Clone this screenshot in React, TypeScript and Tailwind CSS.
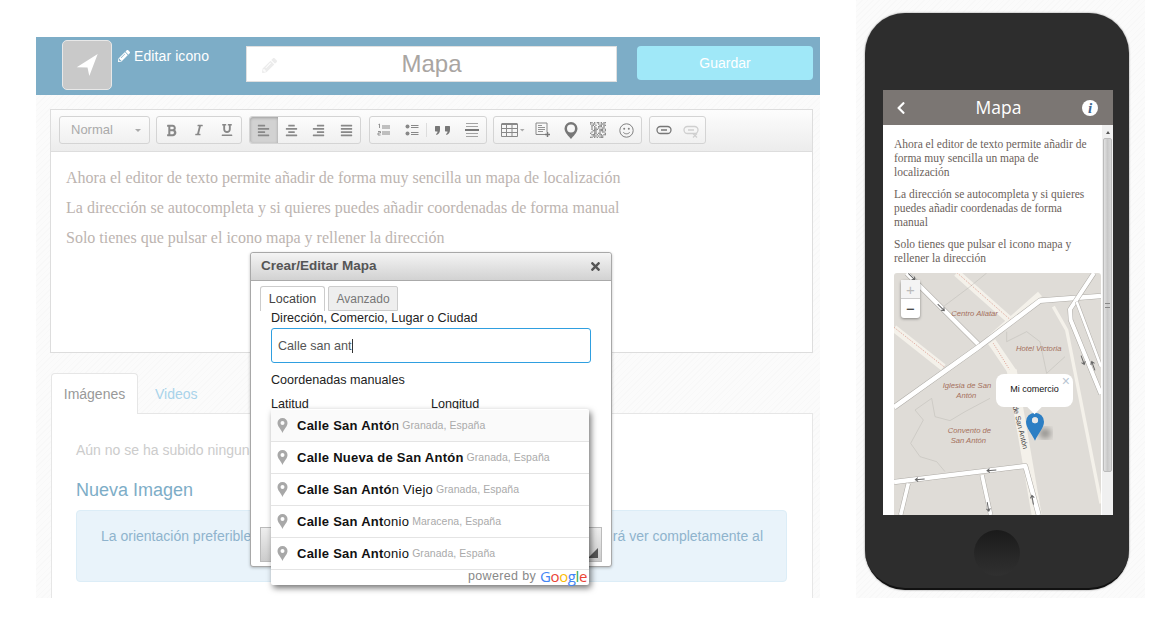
import React from "react";
import { FaPencilAlt, FaBold, FaItalic, FaUnderline, FaAlignLeft, FaAlignCenter, FaAlignRight, FaAlignJustify, FaTimes, FaChevronLeft } from "react-icons/fa";

const tex = "bg-[#fafafa] bg-[repeating-linear-gradient(135deg,#f8f8f8_0px,#f8f8f8_1px,#fbfbfb_1px,#fbfbfb_4px)]";

function Group({ children, className = "" }: { children: React.ReactNode; className?: string }) {
  return <div className={`h-[28px] flex items-center border border-[#d4d4d4] rounded-[3px] bg-gradient-to-b from-[#fcfcfc] to-[#f0f0f0] ${className}`}>{children}</div>;
}
function Btn({ children, w = 28, active = false }: { children: React.ReactNode; w?: number; active?: boolean }) {
  return (
    <div style={{ width: w }} className={`h-full flex items-center justify-center text-[#888] ${active ? "bg-[#d2d2d2] shadow-[inset_0_1px_3px_rgba(0,0,0,0.25)] rounded-l-[3px]" : ""}`}>
      {children}
    </div>
  );
}
function OlIcon() {
  return (
    <svg width="14" height="14" viewBox="0 0 14 14" fill="none" stroke="#888">
      <path d="M5 3h8M5 5h8M5 9h8M5 11h8" />
      <path d="M1.500 1.500 2.500 1v4M1 8.500h2.500v1.500H1V12h2.500" strokeWidth=".9" />
    </svg>
  );
}
function UlIcon() {
  return (
    <svg width="14" height="14" viewBox="0 0 14 14" fill="#888" stroke="#888">
      <circle cx="2.500" cy="3.500" r="2" stroke="none" />
      <circle cx="2.500" cy="10.500" r="2" stroke="none" />
      <path d="M6 2.500h7.500M6 4.500h7.500M6 9.500h7.500M6 11.500h7.500" />
    </svg>
  );
}
function QuoteIcon() {
  return (
    <svg width="15" height="9" viewBox="0 0 15 9" fill="#777">
      <path d="M0 .5C0 .2.300 0 .6 0h3.800c.3 0 .6.200.6.500V4C5 6.500 3.500 8.300 1.500 9L1 8c1-.5 1.500-1.300 1.500-2.500H.6C.3 5.500 0 5.300 0 5zM10 .5c0-.3.300-.5.600-.5h3.800c.3 0 .6.200.6.500V4c0 2.500-1.500 4.300-3.500 5L11 8c1-.5 1.500-1.300 1.500-2.500h-1.900c-.3 0-.6-.2-.6-.5z" />
    </svg>
  );
}
function TableIcon() {
  return (
    <svg width="24" height="14" viewBox="0 0 24 14" fill="none" stroke="#888">
      <path d="M.5 1h16" strokeWidth="2" />
      <path d="M.5 1v12.500h16V1M.5 5.500h16M.5 9.500h16M5.500 1v12.500M11 1v12.500" />
      <path d="M19 6h4.500l-2.250 2.500z" fill="#aaa" stroke="none" />
    </svg>
  );
}
function DocIcon() {
  return (
    <svg width="16" height="16" viewBox="0 0 16 16" fill="none" stroke="#888">
      <path d="M11.500 12.500H1V1h11v9" />
      <path d="M3 3.500h4M3 5.500h7M3 7.500h7M3 9.500h5" strokeWidth=".9" />
      <path d="M12.500 10v5M10 12.500h5" strokeWidth="1.500" stroke="#777" />
    </svg>
  );
}
function PinOutline() {
  return (
    <svg width="14" height="17" viewBox="0 0 14 17">
      <path fillRule="evenodd" d="M7 0a6.500 6.500 0 0 1 6.500 6.500C13.500 10.500 9 14.500 7 17 5 14.500.5 10.500.5 6.500A6.500 6.500 0 0 1 7 0zm0 2.500a4 4 0 1 0 0 8 4 4 0 0 0 0-8z" fill="#777" />
    </svg>
  );
}
function QrIcon() {
  const cells = "110101101011101100101110011010011011010100111010010110100110010111011101001110011101010110010110100110110001011101011011001110101100110101011100".split("");
  return (
    <svg width="16" height="16" viewBox="0 0 12 12">
      {cells.slice(0, 144).map((c, i) => (c === "1" ? <rect key={i} x={i % 12} y={Math.floor(i / 12)} width="1" height="1" fill="#8c8c8c" /> : null))}
    </svg>
  );
}
function SmileIcon() {
  return (
    <svg width="15" height="15" viewBox="0 0 15 15" fill="none" stroke="#808080">
      <circle cx="7.500" cy="7.500" r="6.700" />
      <circle cx="5.200" cy="5.700" r="1" fill="#808080" stroke="none" />
      <circle cx="9.800" cy="5.700" r="1" fill="#808080" stroke="none" />
      <path d="M4.300 9.300c1.500 2 4.900 2 6.400 0" />
    </svg>
  );
}
function LinkIcon({ muted = false }: { muted?: boolean }) {
  const s = muted ? "#cfcfcf" : "#777";
  return (
    <svg width="16" height="16" viewBox="0 0 16 16" fill="none" stroke={s} strokeWidth="1.300">
      <rect x="1" y="4.500" width="14" height="7" rx="3.500" />
      <path d="M5 8h6" strokeWidth="1.500" />
      {muted ? <path d="M10 11.500l4 4M14 11.500l-4 4" /> : null}
    </svg>
  );
}
function HrIcon() {
  return (
    <svg width="14" height="16" viewBox="0 0 14 16" stroke="#999">
      <path d="M1 1.500h12M1 4.500h12M1 11.500h12M1 14.500h12" strokeWidth=".9" />
      <path d="M0 8h14" strokeWidth="2" stroke="#777" />
    </svg>
  );
}
function GreyPin() {
  return (
    <svg width="11" height="15" viewBox="0 0 11 15" className="shrink-0">
      <path fillRule="evenodd" d="M5.500 0a5 5 0 0 1 5 5c0 3.500-3.500 6-5 10-1.500-4-5-6.500-5-10a5 5 0 0 1 5-5zm0 3a2 2 0 1 0 0 4 2 2 0 0 0 0-4z" fill="#a8a8a8" />
    </svg>
  );
}

function Road({ d, w = 15 }: { d: string; w?: number }) {
  return (
    <>
      <path d={d} fill="none" stroke="#aeaba6" strokeWidth={w + 3} strokeLinejoin="round" />
      <path d={d} fill="none" stroke="#ffffff" strokeWidth={w} strokeLinejoin="round" />
    </>
  );
}
function Arrow({ x, y, a }: { x: number; y: number; a: number }) {
  return (
    <g transform={`translate(${x} ${y}) rotate(${a})`} stroke="#666" strokeWidth="3" fill="none">
      <path d="M-14 0h28M6-6l8 6-8 6" />
    </g>
  );
}
function MapArt() {
  return (
    <svg viewBox="42 9 621 726" className="w-full h-full block" style={{ fontFamily: '"Liberation Sans", sans-serif' }}>
      <defs>
        <filter id="blur"><feGaussianBlur stdDeviation="9" /></filter>
      </defs>
      <rect x="42" y="9" width="621" height="726" fill="#dfdcd7" />
      <g fill="none" stroke="#f4f1ea">
        <path d="M230 9 395 155" strokeWidth="22" />
        <path d="M42 175 190 292" strokeWidth="22" />
        <path d="M335 215 400 310" strokeWidth="26" />
        <path d="M395 300 470 735" strokeWidth="30" />
        <path d="M520 110 560 180 663 700" strokeWidth="10" />
        <path d="M330 205 480 72" strokeWidth="18" />
      </g>
      <g fill="none" stroke="#d2796a" strokeWidth="2" strokeDasharray="3 4">
        <path d="M232 9 392 150" />
        <path d="M42 172 194 292" />
        <path d="M340 220 388 298" />
      </g>
      <g fill="none" stroke="#bdbab4" strokeWidth="1.500">
        <path d="M105 420 155 385 165 440 210 452 255 425 330 385" />
        <path d="M105 420 130 450 92 520 120 560 170 575 195 605" />
        <path d="M380 185 380 215 440 185 480 215 500 310 555 260" />
        <path d="M190 110 270 50 320 9" />
      </g>
      <Road d="M80 9 300 228" w={13} />
      <Road d="M42 412 300 228 480 92 663 78" w={14} />
      <Road d="M642 9 570 118 572 150 663 372" w={12} />
      <Road d="M590 95 663 290" w={8} />
      <Road d="M42 636 436 588 476 735" w={13} />
      <Road d="M85 640 62 735" w={11} />
      <Road d="M306 615 332 735" w={11} />
      <Arrow x={95} y={20} a={45} />
      <Arrow x={183} y={112} a={45} />
      <Arrow x={608} y={270} a={70} />
      <Arrow x={640} y={288} a={250} />
      <Arrow x={335} y={601} a={175} />
      <Arrow x={120} y={628} a={175} />
      <Arrow x={458} y={690} a={260} />
      <Arrow x={324} y={710} a={80} />
      <g fill="#a5705c" fontSize="23" fontStyle="italic">
        <text x="214" y="138">Centro Aliatar</text>
        <text x="408" y="244">Hotel Victoria</text>
        <text x="188" y="354">Iglesia de San</text>
        <text x="229" y="384">Antón</text>
        <text x="203" y="488">Convento de</text>
        <text x="212" y="518">San Antón</text>
      </g>
      <text x="0" y="0" fontSize="22" fill="#444" transform="translate(398 410) rotate(76)">de San Antón</text>
      <ellipse cx="495" cy="490" rx="18" ry="16" fill="#000" opacity=".35" filter="url(#blur)" />
      <path fillRule="evenodd" d="M465 428a27 27 0 0 1 27 27c0 18-17 35-27 57-10-22-27-39-27-57a27 27 0 0 1 27-27zm0 14a9 9 0 1 0 0 18 9 9 0 0 0 0-18z" fill="#2d7fc4" />
      <circle cx="465" cy="451" r="9" fill="#e8e8e8" />
    </svg>
  );
}

const results: [string, string, string][] = [
  ["Calle San Antó", "n", "Granada, España"],
  ["Calle Nueva de San Antón", "", "Granada, España"],
  ["Calle San Antó", "n Viejo", "Granada, España"],
  ["Calle San Ant", "onio", "Maracena, España"],
  ["Calle San Ant", "onio", "Granada, España"],
];

export default function App() {
  return (
    <div className="w-[1176px] h-[640px] bg-white flex items-start pl-[36px] overflow-hidden" style={{ fontFamily: '"Liberation Sans", Arial, sans-serif' }}>
      {/* Left panel */}
      <div className={`relative mt-[37px] w-[784px] h-[561px] ${tex}`}>
        <div className="h-[58px] bg-[#7dadc7] flex items-start">
          <div className="ml-[26px] mt-[3px] w-[50px] h-[50px] rounded-[5px] border border-[#e8e8e8] bg-[#c9c9c9] flex items-center justify-center">
            <svg width="26" height="26" viewBox="0 0 26 26"><path d="M23.700 2 2.700 15.300 13.500 15.500 15.300 24z" fill="#fff" /></svg>
          </div>
          <div className="ml-[6px] mt-[11px] w-[128px] flex items-center gap-[4px] text-white text-[14px] leading-[16px] tracking-[0.1px]">
            <FaPencilAlt size={12} />
            <span>Editar icono</span>
          </div>
          <div className="mt-[9px] w-[371px] h-[36px] bg-white border border-[#e0e0e0] relative flex items-center justify-center text-[24px] text-[#a9a5a2]">
            <span className="absolute left-[15px] top-[11px] text-[#ececec]"><FaPencilAlt size={15} /></span>
            Mapa
          </div>
          <div className="ml-[20px] mt-[9px] w-[176px] h-[34px] rounded-[4px] bg-[#a0e8f8] text-white text-[14px] flex items-center justify-center">Guardar</div>
        </div>

        {/* Editor */}
        <div className="ml-[14px] mt-[14px] w-[763px] h-[244px] border border-[#dddddd] bg-white">
          <div className="h-[42px] border-b border-[#dddddd] bg-gradient-to-b from-[#fdfdfd] to-[#ececec] pl-[8px] pt-[6px] flex items-start">
            <Group className="w-[91px] justify-between pl-[11px] pr-[8px] text-[13px] text-[#aaa]">
              <span>Normal</span>
              <span className="w-0 h-0 border-x-[3px] border-x-transparent border-t-[3px] border-t-[#aaa]" />
            </Group>
            <Group className="w-[86px] ml-[6px]">
              <Btn><FaBold size={13} /></Btn>
              <Btn><FaItalic size={12} /></Btn>
              <Btn><FaUnderline size={12} /></Btn>
            </Group>
            <Group className="w-[112px] ml-[7px]">
              <Btn active><FaAlignLeft size={13} /></Btn>
              <Btn><FaAlignCenter size={13} /></Btn>
              <Btn><FaAlignRight size={13} /></Btn>
              <Btn><FaAlignJustify size={13} /></Btn>
            </Group>
            <Group className="w-[118px] ml-[8px]">
              <Btn><OlIcon /></Btn>
              <Btn><UlIcon /></Btn>
              <div className="w-px h-[14px] bg-[#ddd]" />
              <Btn w={32}><QuoteIcon /></Btn>
              <Btn><HrIcon /></Btn>
            </Group>
            <Group className="w-[149px] ml-[6px] pl-[2px]">
              <Btn w={33}><TableIcon /></Btn>
              <Btn><DocIcon /></Btn>
              <Btn w={27}><PinOutline /></Btn>
              <Btn w={28}><QrIcon /></Btn>
              <Btn w={28}><SmileIcon /></Btn>
            </Group>
            <Group className="w-[57px] ml-[7px]">
              <Btn><LinkIcon /></Btn>
              <Btn><LinkIcon muted /></Btn>
            </Group>
          </div>
          <div className="pl-[15px] pt-[16px] text-[16px] leading-[20px] text-[#bcb4b0] flex flex-col gap-[10px]" style={{ fontFamily: '"Liberation Serif", serif' }}>
            <p>Ahora el editor de texto permite añadir de forma muy sencilla un mapa de localización</p>
            <p>La dirección se autocompleta y si quieres puedes añadir coordenadas de forma manual</p>
            <p>Solo tienes que pulsar el icono mapa y rellener la dirección</p>
          </div>
        </div>

        {/* Tabs */}
        <div className="ml-[15px] mt-[20px] w-[762px] h-[41px] flex items-end border-b border-[#e6e6e6]">
          <div className="w-[87px] h-[41px] border border-b-0 border-[#e6e6e6] rounded-t-[4px] bg-white flex items-center justify-center text-[14px] text-[#999] relative -mb-px">Imágenes</div>
          <div className="ml-[17px] h-[41px] pt-[3px] flex items-center text-[14px] text-[#a9d3ea]">Videos</div>
        </div>
        <div className="ml-[15px] w-[762px] h-[184px] bg-white border-x border-[#e6e6e6] pl-[24px] pr-[25px] pt-[26px]">
          <p className="text-[14px] leading-[20px] text-[#cccccc]">Aún no se ha subido ninguna imagen</p>
          <p className="mt-[19px] text-[18px] leading-[22px] text-[#7dadc7]">Nueva Imagen</p>
          <div className="mt-[9px] h-[72px] rounded-[4px] bg-[#e9f3fa] border border-[#dcedf7] pl-[24px] pr-[23px] pt-[15px] flex justify-between text-[14px] leading-[20px] text-[#8fb3cd]">
            <span>La orientación preferible</span>
            <span>rá ver completamente al</span>
          </div>
        </div>

        {/* Modal */}
        <div className="absolute left-[214px] top-[215px] w-[362px] h-[315px] rounded-[3px] border border-[#a8a8a8] bg-white shadow-[0_1px_3px_rgba(0,0,0,0.25)]">
          <div className="h-[28px] rounded-t-[3px] bg-gradient-to-b from-[#f4f4f4] to-[#d2d2d2] border-b border-[#aaa] flex items-center justify-between pl-[10px] pr-[9px]">
            <span className="text-[13.500px] font-bold text-[#555]">Crear/Editar Mapa</span>
            <FaTimes size={13} className="text-[#555]" />
          </div>
          <div className="pl-[9px] pt-[5px] flex items-end gap-[3px]">
            <div className="w-[65px] h-[25px] border border-b-0 border-[#ccc] rounded-t-[3px] flex items-center justify-center text-[12.500px] text-[#444]">Location</div>
            <div className="w-[70px] h-[25px] border border-[#ccc] rounded-t-[2px] bg-[#eeeeee] flex items-center justify-center text-[12px] text-[#777]">Avanzado</div>
          </div>
          <div className="pl-[20px] text-[12.600px] leading-[14px] text-[#222]">
            <p>Dirección, Comercio, Lugar o Ciudad</p>
            <div className="mt-[3px] w-[320px] h-[35px] border border-[#2f9fe0] rounded-[3px] flex items-center pl-[6px] text-[#555]">
              <span>Calle san ant</span><span className="w-px h-[14px] bg-[#333]" />
            </div>
            <p className="mt-[10px]">Coordenadas manuales</p>
            <div className="mt-[10px] flex">
              <span className="w-[160px]">Latitud</span>
              <span>Longitud</span>
            </div>
          </div>
          <div className="absolute left-[9px] bottom-[4px] w-[342px] h-[35px] border border-[#bbb] bg-gradient-to-b from-[#eee] to-[#ccc]">
            <svg width="10" height="10" viewBox="0 0 10 10" className="absolute right-[3px] bottom-[3px]"><path d="M10 0v10H0z" fill="#555" /></svg>
          </div>
        </div>

        {/* Autocomplete */}
        <div className="absolute left-[235px] top-[372px] w-[318px] h-[176px] pt-[1px] bg-white rounded-[2px] shadow-[2px_3px_6px_rgba(0,0,0,0.55)] flex flex-col">
          {results.map(([bold, rest, place], i) => (
            <div key={i} className={`h-[32px] shrink-0 flex items-center border-b border-[#e4e4e4] pl-[6px] ${i === 0 ? "bg-[#fafafa]" : ""}`}>
              <GreyPin />
              <span className="ml-[9px] text-[13px] text-[#111] tracking-[0.25px]"><b>{bold}</b>{rest}</span>
              <span className="ml-[3px] text-[10.500px] text-[#aaa] tracking-[0.05px]">{place}</span>
            </div>
          ))}
          <div className="flex-1 min-h-0 flex items-center justify-end pr-[2px] gap-[4px] pb-[4px]">
            <span className="text-[12.500px] leading-[14px] text-[#888] tracking-[0.35px]">powered by</span>
            <span className="text-[15px] leading-[14px] tracking-[-0.4px]" style={{ fontFamily: '"Open Sans", sans-serif' }}>
              <span className="text-[#4285f4]">G</span><span className="text-[#ea4335]">o</span><span className="text-[#fbbc05]">o</span><span className="text-[#4285f4]">g</span><span className="text-[#34a853]">l</span><span className="text-[#ea4335]">e</span>
            </span>
          </div>
        </div>
      </div>

      {/* Phone */}
      <div className={`ml-[36px] w-[289px] h-[598px] pl-[9px] pt-[13px] ${tex}`}>
        <div className="w-[264px] h-[577px] rounded-[40px] bg-[#2d2d2d] border-b-2 border-[#111] shadow-[0_0_2px_rgba(0,0,0,0.5)] pt-[77px] pl-[18px] flex flex-col">
          <div className="w-[230px] h-[425px] bg-white flex flex-col overflow-hidden">
            <div className="h-[35px] shrink-0 bg-[#7b7673] flex items-center justify-between pl-[11px] pr-[15px] text-white" style={{ fontFamily: '"Open Sans", sans-serif' }}>
              <FaChevronLeft size={14} />
              <span className="ml-[7px] text-[17.500px]">Mapa</span>
              <span className="w-[16px] h-[16px] rounded-full bg-white text-[#41668f] italic font-bold text-[15px] leading-[16px] text-center" style={{ fontFamily: '"Liberation Serif", serif' }}>i</span>
            </div>
            <div className="flex-1 flex min-h-0">
              <div className="flex-1 min-w-0 pl-[11px] pr-[1px] flex flex-col">
                <div className="pt-[12px] text-[11.500px] leading-[14px] text-[#6b5f5b] flex flex-col gap-[8px] pr-[6px]" style={{ fontFamily: '"Liberation Serif", serif' }}>
                  <p>Ahora el editor de texto permite añadir de forma muy sencilla un mapa de localización</p>
                  <p>La dirección se autocompleta y si quieres puedes añadir coordenadas de forma manual</p>
                  <p>Solo tienes que pulsar el icono mapa y rellener la dirección</p>
                </div>
                <div className="relative mt-[8px] flex-1 min-h-0 rounded-t-[3px] overflow-hidden">
                  <MapArt />
                  <div className="absolute left-[7px] top-[7px] w-[19px] h-[38px] rounded-[3px] bg-white shadow-[0_1px_3px_rgba(0,0,0,0.4)] flex flex-col text-center text-[15px] leading-[19px]">
                    <span className="h-[19px] bg-[#f4f4f4] border-b border-[#ccc] text-[#bbb]">+</span>
                    <span className="h-[19px] text-[#222]">−</span>
                  </div>
                  <div className="absolute left-[102px] top-[101px] w-[77px] h-[33px] rounded-[8px] bg-white flex items-center justify-center text-[9px] text-[#111] pb-[2px]">
                    Mi comercio
                    <span className="absolute right-[3px] top-[2px] text-[#b9c5d2] text-[14px] leading-[11px]">×</span>
                    <span className="absolute left-[33px] top-[27px] w-[11px] h-[11px] rotate-45 bg-white" />
                  </div>
                </div>
              </div>
              <div className="w-[11px] shrink-0 bg-[#f0f0f0] flex flex-col items-center relative">
                <span className="mt-[6px] w-0 h-0 border-x-[2px] border-x-transparent border-b-[3px] border-b-[#555]" />
                <div className="mt-[4px] w-[9px] h-[334px] bg-gradient-to-r from-[#e2e2e2] via-[#c8c8c8] to-[#d8d8d8] border border-[#bbb] rounded-[2px]" />
                <span className="absolute top-[178px] left-[3px] w-[5px] h-[5px] border-y border-[#888]" />
              </div>
            </div>
          </div>
          <div className="mt-[15px] ml-[91px] w-[46px] h-[46px] rounded-full bg-gradient-to-b from-[#1a1a1a] via-[#262626] to-[#303030]" />
        </div>
      </div>
    </div>
  );
}
